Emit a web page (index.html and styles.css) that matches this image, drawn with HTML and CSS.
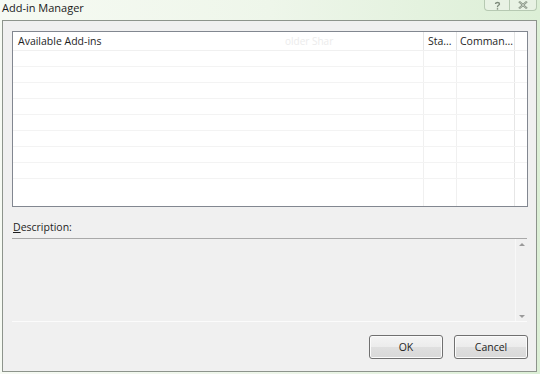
FILE: index.html
```html
<!DOCTYPE html>
<html>
<head>
<meta charset="utf-8">
<link rel="stylesheet" href="styles.css">
</head>
<body>
<div class="window">
  <div class="titlebar">
    <span class="title">Add-in Manager</span>
    <div class="caption-buttons">
      <span class="cbtn help">
        <svg width="9" height="9" viewBox="0 0 9 9"><path d="M2.5 3 C2.5 1 6.5 1 6.5 3 C6.5 4.3 4.5 4.3 4.5 5.8 L4.5 6.3" fill="none" stroke="#7d8a7a" stroke-width="1.3"/><rect x="3.8" y="7.2" width="1.4" height="1.4" fill="#7d8a7a"/></svg>
      </span>
      <span class="cbtn close">
        <svg width="10" height="8" viewBox="0 0 10 8"><path d="M1 0.5 L9 7.5 M9 0.5 L1 7.5" stroke="#7d8a7a" stroke-width="2"/><path d="M1 0.5 L9 7.5 M9 0.5 L1 7.5" stroke="#eef5eb" stroke-width="0.6"/></svg>
      </span>
    </div>
  </div>
  <div class="frame">
    <div class="listbox">
      <div class="header">
        <div class="col c-name">Available Add-ins<span class="ghost">older Shar</span></div>
        <div class="col c-status">Sta...</div>
        <div class="col c-cmd">Comman...</div>
        <div class="col c-fill"></div>
      </div>
      <div class="rows">
        <div class="row"><div class="cell c-name"></div><div class="cell c-status"></div><div class="cell c-cmd"></div><div class="cell c-fill"></div></div>
        <div class="row"><div class="cell c-name"></div><div class="cell c-status"></div><div class="cell c-cmd"></div><div class="cell c-fill"></div></div>
        <div class="row"><div class="cell c-name"></div><div class="cell c-status"></div><div class="cell c-cmd"></div><div class="cell c-fill"></div></div>
        <div class="row"><div class="cell c-name"></div><div class="cell c-status"></div><div class="cell c-cmd"></div><div class="cell c-fill"></div></div>
        <div class="row"><div class="cell c-name"></div><div class="cell c-status"></div><div class="cell c-cmd"></div><div class="cell c-fill"></div></div>
        <div class="row"><div class="cell c-name"></div><div class="cell c-status"></div><div class="cell c-cmd"></div><div class="cell c-fill"></div></div>
        <div class="row"><div class="cell c-name"></div><div class="cell c-status"></div><div class="cell c-cmd"></div><div class="cell c-fill"></div></div>
        <div class="row"><div class="cell c-name"></div><div class="cell c-status"></div><div class="cell c-cmd"></div><div class="cell c-fill"></div></div>
        <div class="row last"><div class="cell c-name"></div><div class="cell c-status"></div><div class="cell c-cmd"></div><div class="cell c-fill"></div></div>
      </div>
    </div>
    <div class="desc-label"><u>D</u>escription:</div>
    <div class="desc-area">
      <div class="desc-text"></div>
      <div class="vscroll">
        <span class="arrow up"></span>
        <span class="arrow down"></span>
      </div>
    </div>
    <div class="buttons">
      <button class="btn">OK</button>
      <button class="btn">Cancel</button>
    </div>
  </div>
</div>
</body>
</html>
```
FILE: styles.css
```css
* { box-sizing: border-box; }
html, body { margin: 0; padding: 0; }
body {
  width: 540px;
  height: 374px;
  overflow: hidden;
  background: #f4f8f1;
  font-family: "Open Sans", "Noto Sans", sans-serif;
  font-size: 10.5px;
  color: #1e1e1e;
}
.window {
  width: 540px;
  height: 374px;
  display: flex;
  flex-direction: column;
  background: linear-gradient(90deg, #f6faf3 0%, #eef6ea 50%, #dcefd6 100%);
}
.titlebar {
  height: 20px;
  display: flex;
  align-items: flex-start;
  justify-content: space-between;
  padding-left: 2px;
}
.title {
  font-size: 11px;
  line-height: 16px;
  color: #1a1a1a;
}
.caption-buttons {
  display: flex;
  margin-right: 3px;
  border: 1px solid #b6c9b2;
  border-top: none;
  border-radius: 0 0 4px 4px;
  height: 11px;
  background: #e8f2e4;
}
.cbtn {
  display: flex;
  align-items: center;
  justify-content: center;
}
.help { width: 25px; border-right: 1px solid #b6c9b2; }
.close { width: 26px; }
.frame {
  flex: 1;
  margin: 0 3px 2px 2px;
  border: 1px solid #8d948c;
  background: #f0f0f0;
  padding: 10px 8px 0 9px;
  display: flex;
  flex-direction: column;
}
.listbox {
  height: 176px;
  border: 1px solid #828790;
  background: #ffffff;
  display: flex;
  flex-direction: column;
  overflow: hidden;
}
.header {
  display: flex;
  height: 19px;
  background: #ffffff;
  border-bottom: 1px solid #f0f0f0;
}
.col {
  font-size: 10.5px;
  line-height: 18px;
  padding-left: 5px;
  color: #1e1e1e;
  white-space: nowrap;
  overflow: hidden;
  border-right: 1px solid #e5e5e5;
}
.c-name { width: 411px; position: relative; }
.c-status { width: 33px; padding-left: 4px; }
.c-cmd { width: 58px; padding-left: 3px; }
.c-fill { flex: 1; border-right: none; }
.ghost {
  position: absolute;
  left: 272px;
  top: 0;
  color: #ececec;
  font-size: 10px;
}
.rows { flex: 1; display: flex; flex-direction: column; }
.row {
  display: flex;
  height: 16px;
  border-bottom: 1px solid #f3f3f3;
}
.row.last { border-bottom: none; flex: 1; }
.cell { border-right: 1px solid #f0f0f0; }
.cell.c-fill { border-right: none; }
.row .c-cmd { border-right: 1px solid #e6e6e6; }
.desc-label {
  margin-top: 13px;
  font-size: 10.5px;
  line-height: 15px;
  padding-left: 1px;
  color: #1e1e1e;
}
.desc-area {
  margin-top: 3px;
  height: 84px;
  border-top: 1px solid #a9a9a9;
  border-bottom: 1px solid #fbfbfb;
  display: flex;
  background: #f0f0f0;
  margin-right: 1px;
}
.desc-text { flex: 1; }
.vscroll {
  width: 12px;
  display: flex;
  flex-direction: column;
  justify-content: space-between;
  align-items: center;
  padding: 4px 0 3px;
  border-left: 1px solid #f8f8f8;
}
.arrow {
  width: 0;
  height: 0;
  border-left: 3px solid transparent;
  border-right: 3px solid transparent;
}
.arrow.up { border-bottom: 3px solid #9a9a9a; }
.arrow.down { border-top: 3px solid #9a9a9a; }
.buttons {
  display: flex;
  justify-content: flex-end;
  gap: 11px;
  margin-top: 13px;
}
.btn {
  width: 74px;
  height: 24px;
  border: 1px solid #707070;
  border-radius: 3px;
  background: linear-gradient(180deg, #f4f4f4 0%, #ececec 48%, #dfdfdf 52%, #d8d8d8 100%);
  font-family: "Open Sans", "Noto Sans", sans-serif;
  font-size: 10.5px;
  color: #1e1e1e;
  padding: 0;
  box-shadow: inset 0 0 0 1px #fbfbfb;
}
```
